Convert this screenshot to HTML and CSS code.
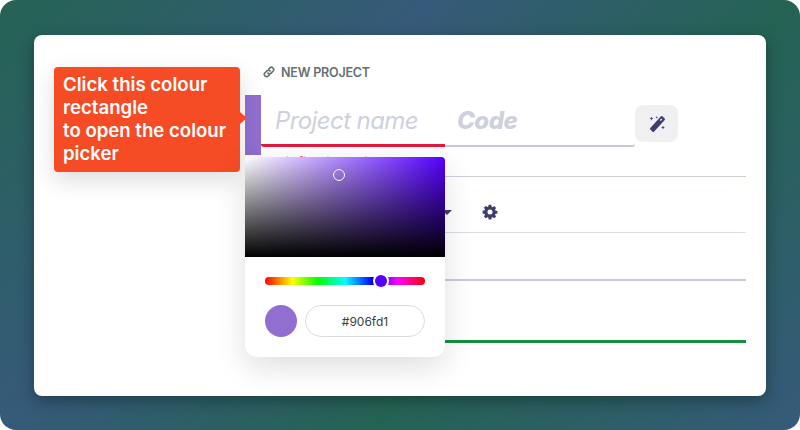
FILE: index.html
```html
<!DOCTYPE html>
<html lang="en">
<head>
<meta charset="utf-8">
<title>New project</title>
<link rel="stylesheet" href="styles.css">
</head>
<body>
<main class="stage">
  <section class="card">
    <div class="form">
      <div class="heading">
        <svg class="link-icon" viewBox="0 0 16 16" width="12" height="12" aria-hidden="true"><path d="M6.600 9.400a3 3 0 0 0 4.300 0l2.400-2.400a3 3 0 0 0-4.300-4.300L7.800 3.900M9.400 6.600a3 3 0 0 0-4.300 0L2.700 9a3 3 0 0 0 4.300 4.300l1.200-1.200" fill="none" stroke="currentColor" stroke-width="2.200" stroke-linecap="round"/></svg>
        <span>NEW PROJECT</span>
      </div>
      <div class="name-row">
        <button class="colour-rect" aria-label="Colour"></button>
        <div class="field name-field"><span class="name-ph">Project name</span></div>
        <div class="field code-field"><span class="code-ph">Code</span></div>
        <button class="magic" aria-label="Generate">
          <svg viewBox="0 0 18 18" width="18" height="18" aria-hidden="true"><path d="M13 1.300a1 1 0 0 1 1.400 0l2.300 2.300a1 1 0 0 1 0 1.400L6 16.700a1 1 0 0 1-1.400 0l-2.300-2.300a1 1 0 0 1 0-1.400z" fill="#3f3d6e"/><path d="M13.300 3.600l1 1-1.500 1.500-1-1z" fill="#f0f0f2"/><path d="M3.500 1.500l.6 1.400 1.400.6-1.400.6-.6 1.400-.6-1.400-1.400-.6 1.400-.6zM8.800 1l.4.900.9.400-.9.400-.4.900-.4-.9-.9-.4.9-.4zM15 10.500l.6 1.400 1.400.6-1.400.6-.6 1.400-.6-1.400-1.400-.6 1.400-.6z" fill="#3f3d6e"/></svg>
        </button>
      </div>
      <p class="error">This field is required</p>
      <div class="toolbar">
        <span class="caret"></span>
        <svg class="gear" viewBox="0 0 16 16" width="16" height="16" aria-hidden="true"><path fill-rule="evenodd" d="M6.700.8h2.600l.4 2 .9.400 1.700-1.100 1.800 1.800-1.100 1.700.4.900 2 .4v2.600l-2 .4-.4.900 1.100 1.700-1.800 1.800-1.700-1.100-.9.400-.4 2H6.700l-.4-2-.9-.4-1.700 1.100-1.800-1.800 1.100-1.700-.4-.9-2-.4V6.700l2-.4.400-.9-1.100-1.700 1.800-1.800 1.700 1.100.9-.4zM8 5.500a2.500 2.500 0 1 0 0 5 2.500 2.500 0 0 0 0-5z" fill="#3f3d6e"/></svg>
      </div>
      <div class="grey-rule"></div>
      <div class="green-rule"></div>
    </div>
    <div class="tip">
      Click this colour rectangle<br>to open the colour picker
    </div>
    <div class="picker">
      <div class="sat"><span class="sat-thumb"></span></div>
      <div class="picker-body">
        <div class="hue"><span class="hue-thumb"></span></div>
        <div class="value-row">
          <span class="swatch"></span>
          <span class="hex">#906fd1</span>
        </div>
      </div>
    </div>
  </section>
</main>
</body>
</html>
```

FILE: styles.css
```css
* { box-sizing: border-box; }
html, body { margin: 0; padding: 0; background: #fff; }
body { width: 800px; height: 430px; overflow: hidden; font-family: Inter, "Liberation Sans", sans-serif; }
.stage {
  width: 800px; height: 430px; border-radius: 16px;
  background: linear-gradient(135deg, #246353 0%, #365a7a 35%, #246353 65%, #365a7a 100%);
  padding: 35px 34px 34px;
}
.card {
  position: relative; width: 732px; height: 361px; background: #fff; border-radius: 8px;
  box-shadow: 0 5px 16px rgba(0, 0, 0, .32);
  padding: 0 20px 0 211px;
}
.form { display: flex; flex-direction: column; }
.heading {
  display: flex; align-items: center; gap: 6px; height: 14px; margin-top: 30px; padding-left: 18px;
  color: #667070; font-size: 12.500px; font-weight: 600; letter-spacing: -.2px;
}
.link-icon { flex: none; }
.name-row { display: flex; align-items: flex-start; height: 60px; margin-top: 16px; }
.colour-rect { flex: none; width: 16px; height: 60px; border: 0; padding: 0; background: #906fd1; }
.field { height: 52px; display: flex; align-items: center; padding-top: 1px; }
.name-field { width: 184px; padding-left: 14px; border-bottom: 3px solid #e5173f; border-bottom-left-radius: 3px; }
.code-field { width: 190px; padding-left: 12px; border-bottom: 2px solid #c9c9d6; border-bottom-right-radius: 3px; }
.name-ph { font-size: 24px; font-style: italic; color: #ced0dc; letter-spacing: -.6px; }
.code-ph { font-size: 24px; font-style: italic; font-weight: 800; color: #ced0dc; letter-spacing: -.5px; }
.magic {
  flex: none; width: 43px; height: 37px; margin-top: 10px; border: 0; padding: 0; border-radius: 8px;
  background: #f0f0f2; display: flex; align-items: center; justify-content: center;
}
.error { margin: 0 0 0 26px; height: 21px; font-size: 12px; line-height: 14px; color: #ef3f5c; }
.toolbar {
  position: relative; height: 57px; border-top: 1px solid #cfcfdc; border-bottom: 1px solid #dcdce6;
  display: flex; align-items: center; padding: 14px 0 0 237px;
}
.gear { flex: none; }
.caret {
  position: absolute; left: 197px; top: 33px; width: 0; height: 0;
  border-left: 5px solid transparent; border-right: 5px solid transparent; border-top: 5px solid #3f3d6e;
}
.grey-rule { height: 2px; margin-top: 46px; background: #cbc9d8; }
.green-rule { height: 3px; margin-top: 59px; background: #168f42; }
.tip {
  position: absolute; left: 20px; top: 32px; width: 186px; height: 105px; padding: 6px 9px;
  background: #f64c25; color: #fff; border-radius: 4px; font-size: 18.600px; font-weight: 600; line-height: 23px;
  box-shadow: 0 8px 24px rgba(0, 0, 0, .14);
}
.tip::after {
  content: ""; position: absolute; left: 100%; top: 45px; width: 0; height: 0;
  border-top: 6px solid transparent; border-bottom: 6px solid transparent; border-left: 7px solid #f64c25;
}
.picker {
  position: absolute; left: 211px; top: 122px; width: 200px; height: 200px; background: #fff;
  border-radius: 4px 4px 12px 12px; box-shadow: 0 10px 30px rgba(0, 0, 0, .13);
}
.sat {
  position: relative; height: 100px; border-radius: 4px 4px 0 0;
  background: linear-gradient(to top, #000, transparent), linear-gradient(to right, #fff, #5500ff);
}
.sat-thumb {
  position: absolute; left: 88px; top: 12px; width: 12px; height: 12px; border-radius: 50%;
  border: 1px solid #fff; box-shadow: 0 0 1px rgba(0, 0, 0, .5);
}
.picker-body { padding: 20px; display: flex; flex-direction: column; gap: 20px; }
.hue {
  position: relative; height: 8px; border-radius: 4px;
  background: linear-gradient(to right, #f00 0%, #ff0 17%, #0f0 33%, #0ff 50%, #00f 67%, #f0f 83%, #f00 100%);
}
.hue-thumb {
  position: absolute; left: 110px; top: -2px; width: 12px; height: 12px; border-radius: 50%;
  background: #5500ff; box-shadow: 0 0 0 2px #fff;
}
.value-row { display: flex; gap: 8px; }
.swatch { flex: none; width: 32px; height: 32px; border-radius: 50%; background: #906fd1; }
.hex {
  flex: none; width: 120px; height: 32px; border: 1px solid #dcdcdf; border-radius: 16px;
  display: flex; align-items: center; justify-content: center; font-size: 12px; color: #3c3c46;
}
```
